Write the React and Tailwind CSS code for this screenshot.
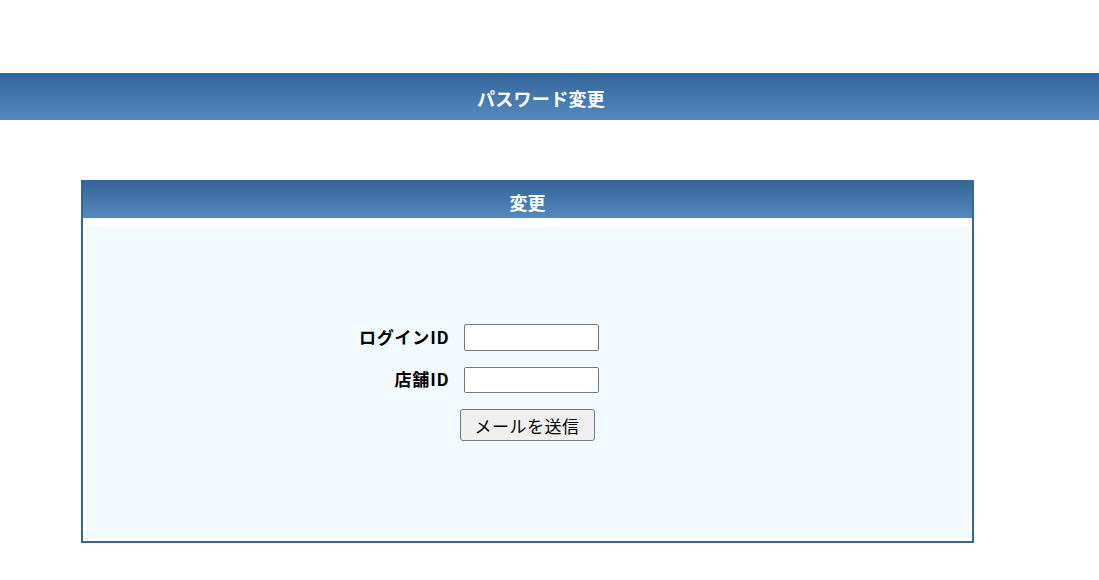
export default function App() {
  const font = { fontFamily: '"Noto Sans CJK JP", "Noto Sans", sans-serif' };
  return (
    <div className="w-[1099px] h-[580px] bg-white overflow-hidden" style={font}>
      <div className="h-[73px]" />
      <div className="h-[47px] bg-gradient-to-b from-[#326598] to-[#5689c1] flex items-center justify-center pr-[17px]">
        <h1 className="text-white font-bold text-[18px] tracking-[0.3px] leading-none pt-[2px]">パスワード変更</h1>
      </div>
      <div className="h-[60px]" />
      <div className="ml-[81px] w-[893px] h-[363px] border-2 border-[#336699] bg-white flex flex-col">
        <div className="h-[36px] bg-gradient-to-b from-[#336699] to-[#5789c0] flex justify-center pt-[10px]">
          <span className="text-white font-bold text-[18px] leading-5">変更</span>
        </div>
        <div className="flex-1 pt-[9px] px-[3px] pb-[3px] flex">
          <div className="flex-1 bg-[#f3fafd] flex items-center justify-center">
            <div className="w-[386px] grid grid-cols-[129px_135px_122px] items-center">
              <label className="whitespace-nowrap text-right pr-[14px] font-bold text-[17px] tracking-[0.8px] leading-6 text-black -mt-[2px]">ログインID</label>
              <input className="h-[27px] w-[135px] bg-white border border-[#767676] rounded-[2px]" />
              <div />
              <div className="col-span-3 h-[16px]" />
              <label className="whitespace-nowrap text-right pr-[14px] font-bold text-[17px] tracking-[0.8px] leading-6 text-black -mt-[2px]">店舗ID</label>
              <input className="h-[26px] w-[135px] bg-white border border-[#767676] rounded-[2px]" />
              <div />
              <div className="col-span-3 h-[16px]" />
              <div />
              <button className="-ml-1 h-[32px] w-[135px] bg-[#efefef] border border-[#767676] rounded-[3px] text-[17px] tracking-[0.5px] text-black leading-none">メールを送信</button>
              <div />
            </div>
          </div>
        </div>
      </div>
    </div>
  );
}
